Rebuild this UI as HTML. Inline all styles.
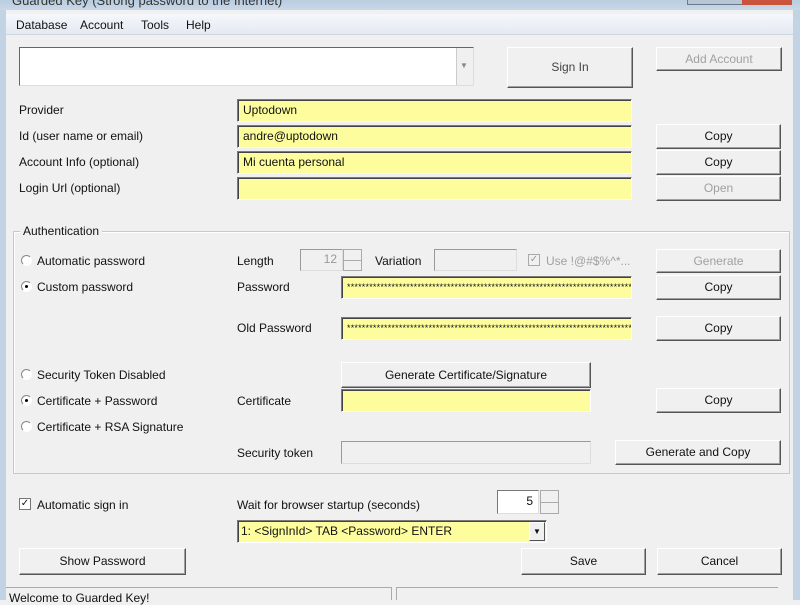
<!DOCTYPE html>
<html><head><style>
*{margin:0;padding:0;box-sizing:border-box}
body{width:800px;height:600px;overflow:hidden;background:#f0f0f0;font-family:"Liberation Sans",sans-serif;font-size:12px;color:#111;position:relative}
.a{position:absolute}
.lbl{position:absolute;white-space:nowrap;line-height:14px}
.btn{position:absolute;background:#f0f0f0;border:1px solid;border-color:#fff #555 #555 #fff;box-shadow:inset -1px -1px 0 #a0a0a0;text-align:center;white-space:nowrap}
.dis{color:#a0a0a0}
.fld{position:absolute;background:#fdfd9e;border:1px solid;border-color:#7a7a7a #fff #fff #7a7a7a;box-shadow:inset 1px 1px 0 #444;padding-left:5px;white-space:nowrap;overflow:hidden}
.stars{font-size:9px;letter-spacing:0.2px}
.rad{position:absolute;width:11px;height:11px;border-radius:50%;border:1px solid #888;border-right-color:#fff;border-bottom-color:#fff;background:#fff}
.rad.on:after{content:"";position:absolute;left:3px;top:3px;width:3px;height:3px;border-radius:50%;background:#000}
</style></head><body>
<div class="a" style="left:0;top:0;width:800px;height:10px;background:linear-gradient(#b9cde0,#c8d8e8)"></div>
<div class="lbl" style="left:12px;top:-6px;color:#333;font-size:13px">Guarded Key (Strong password to the Internet)</div>
<div class="a" style="left:687px;top:0;width:105px;height:5px;background:#b9c6d6;border:1px solid #6a7a8a;border-top:none"></div>
<div class="a" style="left:742px;top:0;width:50px;height:5px;background:#c9543b"></div>
<div class="a" style="left:0;top:10px;width:6px;height:590px;background:#c2d3e4"></div>
<div class="a" style="left:793px;top:10px;width:7px;height:590px;background:#c2d3e4"></div>
<div class="a" style="left:6px;top:14px;width:787px;height:21px;background:linear-gradient(#f5f8fc,#e4eaf2);border-bottom:1px solid #d0d6de"></div>
<div class="lbl" style="left:16px;top:18px">Database</div>
<div class="lbl" style="left:80px;top:18px">Account</div>
<div class="lbl" style="left:141px;top:18px">Tools</div>
<div class="lbl" style="left:186px;top:18px">Help</div>

<div class="a" style="left:19px;top:47px;width:455px;height:39px;background:#fff;border:1px solid;border-color:#666 #ddd #ddd #666"></div>
<div class="a" style="left:456px;top:48px;width:17px;height:37px;background:#f0f0f0;border-left:1px solid #ccc"></div>
<div class="lbl" style="left:460px;top:59px;font-size:8px;color:#888">▼</div>
<div class="btn" style="left:507px;top:47px;width:126px;height:41px;line-height:39px;color:#444">Sign In</div>
<div class="btn dis" style="left:656px;top:47px;width:126px;height:24px;line-height:22px">Add Account</div>

<div class="lbl" style="left:19px;top:103px">Provider</div>
<div class="lbl" style="left:19px;top:129px">Id (user name or email)</div>
<div class="lbl" style="left:19px;top:155px">Account Info (optional)</div>
<div class="lbl" style="left:19px;top:181px">Login Url (optional)</div>
<div class="fld" style="left:237px;top:99px;width:395px;height:23px;line-height:21px">Uptodown</div>
<div class="fld" style="left:237px;top:125px;width:395px;height:23px;line-height:21px">andre@uptodown</div>
<div class="fld" style="left:237px;top:151px;width:395px;height:23px;line-height:21px">Mi cuenta personal</div>
<div class="fld" style="left:237px;top:177px;width:395px;height:23px"></div>
<div class="btn" style="left:656px;top:124px;width:125px;height:25px;line-height:23px">Copy</div>
<div class="btn" style="left:656px;top:150px;width:125px;height:25px;line-height:23px">Copy</div>
<div class="btn dis" style="left:656px;top:176px;width:125px;height:25px;line-height:23px">Open</div>

<div class="a" style="left:13px;top:231px;width:777px;height:243px;border:1px solid #c8c8c8;box-shadow:inset 1px 1px 0 #fff"></div>
<div class="lbl" style="left:20px;top:224px;background:#f0f0f0;padding:0 3px">Authentication</div>
<div class="rad" style="left:21px;top:255px"></div><div class="lbl" style="left:37px;top:254px">Automatic password</div>
<div class="rad on" style="left:21px;top:281px"></div><div class="lbl" style="left:37px;top:280px">Custom password</div>
<div class="rad" style="left:21px;top:369px"></div><div class="lbl" style="left:37px;top:368px">Security Token Disabled</div>
<div class="rad on" style="left:21px;top:395px"></div><div class="lbl" style="left:37px;top:394px">Certificate + Password</div>
<div class="rad" style="left:21px;top:421px"></div><div class="lbl" style="left:37px;top:420px">Certificate + RSA Signature</div>

<div class="lbl" style="left:237px;top:254px">Length</div>
<div class="a" style="left:300px;top:249px;width:43px;height:22px;border:1px solid;border-color:#999 #ddd #ddd #999;text-align:right;padding-right:5px;line-height:18px;color:#999">12</div>
<div class="a" style="left:343px;top:249px;width:19px;height:22px;border:1px solid #aaa;background:#f0f0f0"></div>
<div class="a" style="left:343px;top:260px;width:19px;height:1px;background:#aaa"></div>
<div class="lbl" style="left:375px;top:254px">Variation</div>
<div class="a" style="left:434px;top:249px;width:83px;height:22px;border:1px solid;border-color:#999 #ddd #ddd #999"></div>
<div class="a" style="left:528px;top:254px;width:12px;height:12px;border:1px solid #aaa;color:#999;font-size:10px;line-height:10px;text-align:center">✓</div>
<div class="lbl dis" style="left:546px;top:254px">Use !@#$%^*...</div>
<div class="btn dis" style="left:656px;top:249px;width:125px;height:24px;line-height:22px">Generate</div>

<div class="lbl" style="left:237px;top:280px">Password</div>
<div class="fld stars" style="left:341px;top:276px;width:291px;height:23px;line-height:21px">******************************************************************************</div>
<div class="btn" style="left:656px;top:275px;width:125px;height:25px;line-height:23px">Copy</div>
<div class="lbl" style="left:237px;top:321px">Old Password</div>
<div class="fld stars" style="left:341px;top:317px;width:291px;height:23px;line-height:21px">******************************************************************************</div>
<div class="btn" style="left:656px;top:316px;width:125px;height:25px;line-height:23px">Copy</div>

<div class="btn" style="left:341px;top:362px;width:250px;height:26px;line-height:24px">Generate Certificate/Signature</div>
<div class="lbl" style="left:237px;top:394px">Certificate</div>
<div class="fld" style="left:341px;top:389px;width:250px;height:23px"></div>
<div class="btn" style="left:656px;top:388px;width:125px;height:25px;line-height:23px">Copy</div>
<div class="lbl" style="left:237px;top:446px">Security token</div>
<div class="a" style="left:341px;top:441px;width:250px;height:23px;border:1px solid;border-color:#999 #ddd #ddd #999"></div>
<div class="btn" style="left:615px;top:440px;width:166px;height:25px;line-height:23px">Generate and Copy</div>

<div class="a" style="left:19px;top:498px;width:12px;height:12px;border:1px solid #777;background:#fff;font-size:10px;line-height:10px;text-align:center">✓</div>
<div class="lbl" style="left:37px;top:498px">Automatic sign in</div>
<div class="lbl" style="left:237px;top:498px">Wait for browser startup (seconds)</div>
<div class="a" style="left:497px;top:490px;width:42px;height:24px;background:#fff;border:1px solid;border-color:#777 #ddd #ddd #777;text-align:right;padding-right:5px;line-height:20px">5</div>
<div class="a" style="left:540px;top:490px;width:19px;height:24px;border:1px solid #aaa;background:#f0f0f0"></div>
<div class="a" style="left:540px;top:502px;width:19px;height:1px;background:#aaa"></div>
<div class="fld" style="left:237px;top:520px;width:310px;height:23px;line-height:21px;padding-left:3px">1: &lt;SignInId&gt; TAB &lt;Password&gt; ENTER</div>
<div class="a" style="left:529px;top:522px;width:16px;height:19px;background:#f0f0f0;border:1px solid;border-color:#fff #555 #555 #fff;font-size:8px;text-align:center;line-height:17px">▼</div>

<div class="btn" style="left:19px;top:548px;width:167px;height:27px;line-height:25px">Show Password</div>
<div class="btn" style="left:521px;top:548px;width:125px;height:27px;line-height:25px">Save</div>
<div class="btn" style="left:657px;top:548px;width:125px;height:27px;line-height:25px">Cancel</div>

<div class="a" style="left:6px;top:587px;width:386px;height:13px;border-top:1px solid #aaa;border-right:1px solid #aaa"></div>
<div class="a" style="left:396px;top:587px;width:382px;height:13px;border-top:1px solid #aaa;border-left:1px solid #aaa"></div>
<div class="lbl" style="left:9px;top:591px">Welcome to Guarded Key!</div>
</body></html>
